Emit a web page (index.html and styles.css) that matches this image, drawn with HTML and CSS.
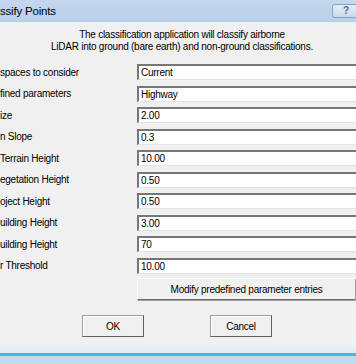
FILE: index.html
```html
<!DOCTYPE html>
<html lang="en">
<head>
  <meta charset="UTF-8">
  <title>Classify Points</title>
  <link rel="stylesheet" href="styles.css">
</head>
<body>
  <!-- Title bar -->
  <header class="titlebar">
    <span class="title">ssify Points</span>
    <span class="help-btn">?</span>
  </header>

  <div class="dialog">
    <p class="intro">
      The classification application will classify airborne<br>
      LiDAR into ground (bare earth) and non-ground classifications.
    </p>

    <!-- Parameters -->
    <div class="params">
      <label>spaces to consider</label>
      <div class="field">Current</div>
      <label>fined parameters</label>
      <div class="field">Highway</div>
      <label>ize</label>
      <div class="field">2.00</div>
      <label>n Slope</label>
      <div class="field">0.3</div>
      <label>Terrain Height</label>
      <div class="field">10.00</div>
      <label>egetation Height</label>
      <div class="field">0.50</div>
      <label>oject Height</label>
      <div class="field">0.50</div>
      <label>uilding Height</label>
      <div class="field">3.00</div>
      <label>uilding Height</label>
      <div class="field">70</div>
      <label>r Threshold</label>
      <div class="field">10.00</div>
      <span></span>
      <button class="btn modify-btn">Modify predefined parameter entries</button>
    </div>

    <div class="actions">
      <button class="btn action-btn">OK</button>
      <button class="btn action-btn">Cancel</button>
    </div>
  </div>

  <div class="frame"></div>
</body>
</html>
```

FILE: styles.css
```css
* {
  margin: 0;
  padding: 0;
  box-sizing: border-box;
  font-family: 'Liberation Sans', Arial, sans-serif;
}

body {
  width: 356px;
  height: 364px;
  overflow: hidden;
  background: #f0f0f0;
  color: #000;
  font-size: 10px;
  letter-spacing: -0.25px;
  display: flex;
  flex-direction: column;
}

/* Title bar */
.titlebar {
  height: 22px;
  background: linear-gradient(#c4d8ed, #b8cfe8);
  display: flex;
  align-items: center;
  justify-content: space-between;
  flex-shrink: 0;
}

.title {
  font-size: 11.5px;
  letter-spacing: -0.2px;
  padding-bottom: 1px;
}

.help-btn {
  width: 28px;
  height: 14px;
  margin-right: -4px;
  border: 1px solid #8ba3c0;
  border-radius: 3px;
  background: linear-gradient(#e4edf7, #c9daee);
  color: #5a6f8c;
  font-size: 10px;
  font-weight: bold;
  text-align: center;
  line-height: 12px;
  letter-spacing: 0;
}

/* Body */
.dialog {
  flex: 1;
  padding-top: 7px;
}

.intro {
  text-align: center;
  line-height: 12px;
  padding-left: 8px;
}

.params {
  display: grid;
  grid-template-columns: 137px 219px;
  grid-auto-rows: 16px;
  row-gap: 5.55px;
  margin-top: 11px;
  align-items: center;
}

.params label {
  white-space: nowrap;
}

.field {
  height: 16px;
  margin-right: -10px;
  background: #fff;
  border-top: 2px solid #777;
  border-left: 2px solid #777;
  border-bottom: 1px solid #e3e3e3;
  padding-left: 2px;
  line-height: 13px;
}

/* Buttons */
.btn {
  background: #f0f0f0;
  font-size: 10px;
  letter-spacing: -0.25px;
  color: #000;
  border: 1px solid #fff;
  border-right-color: #696969;
  border-bottom-color: #696969;
  box-shadow: 1px 1px 0 #a0a0a0;
}

.modify-btn {
  height: 22px;
  margin-top: 4px;
  width: 218px;
  border-right: none;
}

.actions {
  display: flex;
  gap: 66px;
  padding-left: 82px;
  margin-top: 20px;
}

.action-btn {
  width: 62px;
  height: 22px;
  border-color: #a0a0a0;
  border-right-color: #606060;
  border-bottom-color: #606060;
  box-shadow: inset 1px 1px 0 #fff;
}

/* Window frame */
.frame {
  height: 19px;
  flex-shrink: 0;
  background: linear-gradient(#f0f0f0 0, #e2ebf2 8px, #4ab3e6 8px, #4ab3e6 11px, #bcdcf1 11px);
}
```
